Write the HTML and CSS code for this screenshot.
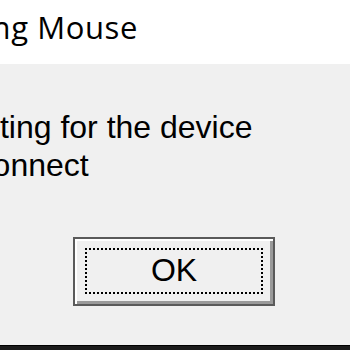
FILE: index.html
```html
<!DOCTYPE html>
<html>
<head>
<meta charset="utf-8">
<link rel="stylesheet" href="styles.css">
</head>
<body>
<div class="window">
  <div class="titlebar">
    <div class="title">Connecting Mouse</div>
  </div>
  <div class="content">
    <div class="message">
      <div class="line">Waiting for the device</div>
      <div class="line line-second">to connect</div>
    </div>
    <div class="actions">
      <div class="btn"><span class="focus">OK</span></div>
    </div>
  </div>
  <div class="frame-bottom"></div>
</div>
</body>
</html>
```

FILE: styles.css
```css
html, body {
  margin: 0;
  padding: 0;
  width: 350px;
  height: 350px;
  overflow: hidden;
  background: #f0f0f0;
}
.window {
  display: flex;
  flex-direction: column;
  width: 350px;
  height: 350px;
  overflow: hidden;
}
.titlebar {
  height: 64px;
  box-sizing: border-box;
  padding-top: 12px;
  background: #ffffff;
  flex: none;
}
.title {
  width: 138px;
  display: flex;
  justify-content: flex-end;
  white-space: nowrap;
  font-family: "Open Sans", "Noto Sans", sans-serif;
  font-size: 31px;
  line-height: 31px;
  letter-spacing: 0.6px;
  color: #000;
}
.content {
  height: 281px;
  box-sizing: border-box;
  padding-top: 44px;
  background: #f0f0f0;
  flex: none;
}
.message {
  margin-left: -54px;
  font-family: "Liberation Sans", Arial, sans-serif;
  font-size: 32px;
  line-height: 38px;
  color: #000;
  white-space: nowrap;
}
.line-second {
  margin-left: -5px;
}
.actions {
  display: flex;
  padding-left: 73px;
  margin-top: 53px;
}
.btn {
  width: 202px;
  height: 69px;
  box-sizing: border-box;
  border: 2px solid #5a5a5a;
  box-shadow: inset 2px 2px 0 #ffffff, inset -3px -3px 0 #9a9a9a;
  background: #f0f0f0;
  padding: 9px 10px 10px 10px;
  display: flex;
}
.focus {
  flex: 1;
  border: 2px dotted #000;
  display: flex;
  align-items: center;
  justify-content: center;
  font-family: "Liberation Sans", Arial, sans-serif;
  font-size: 32px;
  color: #000;
  padding-bottom: 2px;
}
.frame-bottom {
  height: 5px;
  background: #1b1b1b;
  border-top: 1px solid #000;
  flex: none;
}
```
